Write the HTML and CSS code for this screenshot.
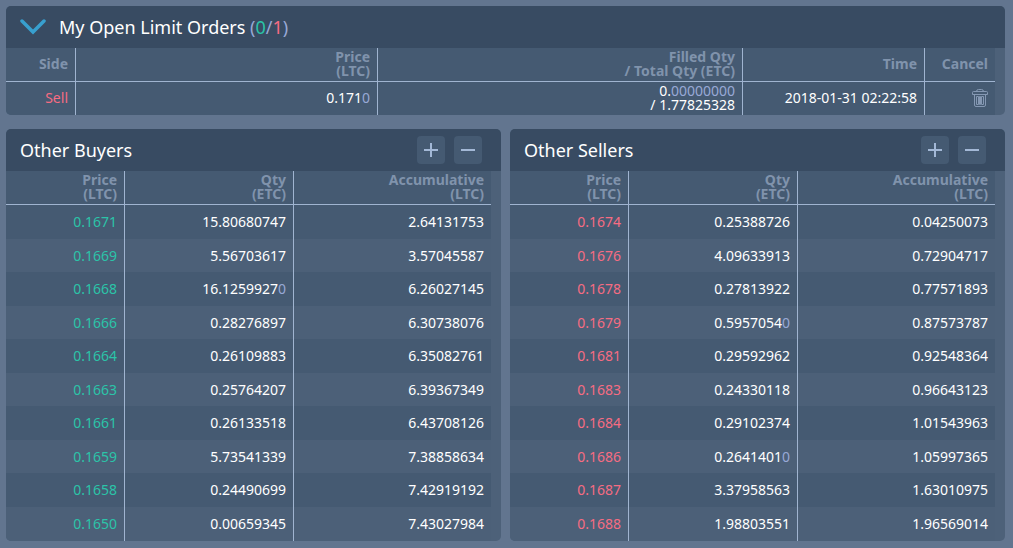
FILE: index.html
```
<!DOCTYPE html>
<html lang="en">
<head>
<meta charset="utf-8">
<title>Orders</title>
<link rel="stylesheet" href="styles.css">
</head>
<body>
<main class="page">
  <section class="panel">
    <header class="panel-head">
      <button class="toggle" type="button" aria-label="Collapse">
        <svg width="26" height="16" viewBox="0 0 26 16" fill="none" stroke="#38a0cf" stroke-width="3.500" stroke-linecap="round" stroke-linejoin="miter"><path d="M2 2L13 13L24 2"/></svg>
      </button>
      <h2 class="title">My Open Limit Orders <span class="dim">(<span class="buy">0</span>/<span class="sell">1</span>)</span></h2>
    </header>
    <div class="panel-body">
      <table class="grid orders">
        <colgroup><col class="o-side"><col class="o-price"><col class="o-qty"><col class="o-time"><col class="o-cancel"></colgroup>
        <thead><tr><th>Side</th><th>Price<br>(LTC)</th><th>Filled Qty<br>/ Total Qty (ETC)</th><th>Time</th><th>Cancel</th></tr></thead>
        <tbody><tr>
          <td class="sell">Sell</td>
          <td>0.171<span class="dim">0</span></td>
          <td>0.<span class="dim">00000000</span><br>/ 1.77825328</td>
          <td>2018-01-31 02:22:58</td>
          <td><button class="trash" type="button" aria-label="Cancel order"><svg width="16" height="18" viewBox="0 0 16 18" fill="none" stroke="#8598b3" stroke-width="1"><path d="M4.5 2.5Q4.500 .5 6.500 .5H9.500Q11.500 .5 11.500 2.500M1.500 2.500H14.500Q15.500 2.500 15.500 3.500V5.500H.5V3.500Q.5 2.500 1.500 2.500ZM2.500 5.500V16Q2.500 17.500 4 17.500H12Q13.500 17.500 13.500 16V5.500M4.500 7.500H6.500V15.500H4.500ZM7.500 7.500H8.500V15.500H7.500ZM9.500 7.500H11.500V15.500H9.500Z"/></svg></button></td>
        </tr></tbody>
      </table>
    </div>
  </section>

  <div class="books">
    <section class="panel">
      <header class="panel-head">
        <h2 class="title">Other Buyers</h2>
        <div class="actions">
          <button class="step" type="button" aria-label="More"><svg width="14" height="14" viewBox="0 0 14 14" stroke="#a3b8d6" stroke-width="2"><path d="M0 7H14M7 0V14"/></svg></button>
          <button class="step" type="button" aria-label="Less"><svg width="14" height="14" viewBox="0 0 14 14" stroke="#a3b8d6" stroke-width="2"><path d="M0 7H14"/></svg></button>
        </div>
      </header>
      <div class="panel-body">
        <table class="grid book">
          <colgroup><col class="b-price"><col class="b-qty"><col class="b-acc"></colgroup>
          <thead><tr><th>Price<br>(LTC)</th><th>Qty<br>(ETC)</th><th>Accumulative<br>(LTC)</th></tr></thead>
          <tbody>
            <tr><td class="buy">0.1671</td><td>15.80680747</td><td>2.64131753</td></tr>
            <tr><td class="buy">0.1669</td><td>5.56703617</td><td>3.57045587</td></tr>
            <tr><td class="buy">0.1668</td><td>16.1259927<span class="dim">0</span></td><td>6.26027145</td></tr>
            <tr><td class="buy">0.1666</td><td>0.28276897</td><td>6.30738076</td></tr>
            <tr><td class="buy">0.1664</td><td>0.26109883</td><td>6.35082761</td></tr>
            <tr><td class="buy">0.1663</td><td>0.25764207</td><td>6.39367349</td></tr>
            <tr><td class="buy">0.1661</td><td>0.26133518</td><td>6.43708126</td></tr>
            <tr><td class="buy">0.1659</td><td>5.73541339</td><td>7.38858634</td></tr>
            <tr><td class="buy">0.1658</td><td>0.24490699</td><td>7.42919192</td></tr>
            <tr><td class="buy">0.1650</td><td>0.00659345</td><td>7.43027984</td></tr>
          </tbody>
        </table>
      </div>
    </section>

    <section class="panel">
      <header class="panel-head">
        <h2 class="title">Other Sellers</h2>
        <div class="actions">
          <button class="step" type="button" aria-label="More"><svg width="14" height="14" viewBox="0 0 14 14" stroke="#a3b8d6" stroke-width="2"><path d="M0 7H14M7 0V14"/></svg></button>
          <button class="step" type="button" aria-label="Less"><svg width="14" height="14" viewBox="0 0 14 14" stroke="#a3b8d6" stroke-width="2"><path d="M0 7H14"/></svg></button>
        </div>
      </header>
      <div class="panel-body">
        <table class="grid book">
          <colgroup><col class="b-price"><col class="b-qty"><col class="b-acc"></colgroup>
          <thead><tr><th>Price<br>(LTC)</th><th>Qty<br>(ETC)</th><th>Accumulative<br>(LTC)</th></tr></thead>
          <tbody>
            <tr><td class="sell">0.1674</td><td>0.25388726</td><td>0.04250073</td></tr>
            <tr><td class="sell">0.1676</td><td>4.09633913</td><td>0.72904717</td></tr>
            <tr><td class="sell">0.1678</td><td>0.27813922</td><td>0.77571893</td></tr>
            <tr><td class="sell">0.1679</td><td>0.5957054<span class="dim">0</span></td><td>0.87573787</td></tr>
            <tr><td class="sell">0.1681</td><td>0.29592962</td><td>0.92548364</td></tr>
            <tr><td class="sell">0.1683</td><td>0.24330118</td><td>0.96643123</td></tr>
            <tr><td class="sell">0.1684</td><td>0.29102374</td><td>1.01543963</td></tr>
            <tr><td class="sell">0.1686</td><td>0.2641401<span class="dim">0</span></td><td>1.05997365</td></tr>
            <tr><td class="sell">0.1687</td><td>3.37958563</td><td>1.63010975</td></tr>
            <tr><td class="sell">0.1688</td><td>1.98803551</td><td>1.96569014</td></tr>
          </tbody>
        </table>
      </div>
    </section>
  </div>
</main>
</body>
</html>
```
FILE: styles.css
```
* { box-sizing: border-box; }

body {
  margin: 0;
  background: #62758f;
  color: #fff;
  font-family: "Noto Sans", sans-serif;
  font-size: 14px;
  line-height: 14px;
}

.page {
  display: flex;
  flex-direction: column;
  gap: 14px;
  padding: 6px 8px 6px 6px;
}

.books {
  display: grid;
  grid-template-columns: 1fr 1fr;
  gap: 9px;
}

.panel {
  overflow: hidden;
  border-radius: 5px;
  background: #4d6179;
}

.panel-head {
  display: flex;
  align-items: center;
  height: 42px;
  padding: 0 19px 0 14px;
  background: #384b62;
}

.panel-body { padding-right: 10px; }

.title {
  margin: 0;
  font-size: 18px;
  font-weight: 400;
  line-height: 24px;
}

.actions {
  display: flex;
  gap: 9px;
  margin-left: auto;
}

button {
  display: flex;
  align-items: center;
  justify-content: center;
  padding: 0;
  border: 0;
  background: none;
  cursor: pointer;
}

.toggle { margin-right: 13px; }

.step {
  width: 28px;
  height: 28px;
  border-radius: 4px;
  background: #455a72;
}

.trash { margin-left: auto; }

.grid {
  width: 100%;
  table-layout: fixed;
  border-collapse: separate;
  border-spacing: 0;
  text-align: right;
}

.grid th,
.grid td {
  height: 34px;
  padding: 0 7px;
  border-right: 1px solid #a0b4d0;
}

.grid th:last-child,
.grid td:last-child { border-right: 0; }

.grid th {
  padding-bottom: 2px;
  border-bottom: 1px solid #a0b4d0;
  background: #455a72;
  color: #8093ac;
  font-weight: 700;
}

.grid tbody tr { background: #455a72; }
.grid tbody tr:nth-child(even) { background: #4c6078; }
.grid tbody tr:nth-child(even) td,
.orders tbody td { height: 33px; }
.orders tbody td { padding-bottom: 2px; }
.book tbody tr:last-child td { height: 34px; }

.o-side { width: 70px; }
.o-price { width: 302px; }
.o-time { width: 182px; }
.o-cancel { width: 70px; }

.b-price { width: 119px; }
.b-qty { width: 169px; }

.buy,
.grid .buy { color: #2bc4a8; }
.sell,
.grid .sell { color: #f66c82; }
.dim { color: #98a9d6; }
```
